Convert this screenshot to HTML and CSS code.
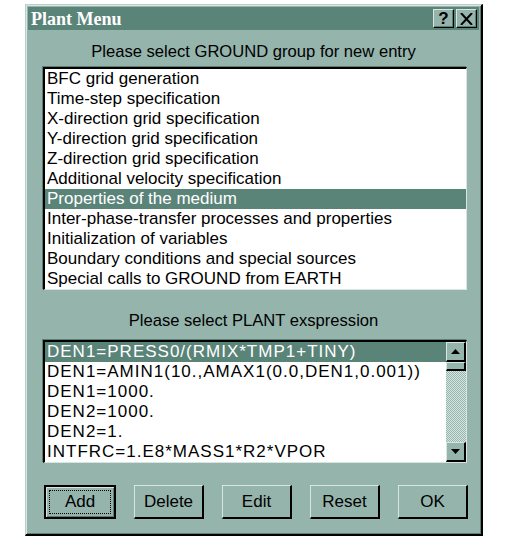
FILE: index.html
```html
<!DOCTYPE html>
<html>
<head>
<meta charset="utf-8">
<link rel="stylesheet" href="styles.css">
</head>
<body>
<div class="window">
  <div class="titlebar">
    <span class="title">Plant Menu</span>
    <div class="tbtns">
      <span class="tbtn">?</span>
      <span class="tbtn x">
        <svg width="13" height="12" viewBox="0 0 13 12"><path d="M1 0 L12 12 M12 0 L1 12" stroke="#000" stroke-width="2" fill="none"/></svg>
      </span>
    </div>
  </div>
  <div class="label first">Please select GROUND group for new entry</div>
  <div class="list">
    <div class="row">BFC grid generation</div>
    <div class="row">Time-step specification</div>
    <div class="row">X-direction grid specification</div>
    <div class="row">Y-direction grid specification</div>
    <div class="row">Z-direction grid specification</div>
    <div class="row">Additional velocity specification</div>
    <div class="row sel">Properties of the medium</div>
    <div class="row">Inter-phase-transfer processes and properties</div>
    <div class="row">Initialization of variables</div>
    <div class="row">Boundary conditions and special sources</div>
    <div class="row">Special calls to GROUND from EARTH</div>
  </div>
  <div class="label second">Please select PLANT exspression</div>
  <div class="list list2">
    <div class="rows">
      <div class="row sel">DEN1=PRESS0/(RMIX*TMP1+TINY)</div>
      <div class="row">DEN1=AMIN1(10.,AMAX1(0.0,DEN1,0.001))</div>
      <div class="row">DEN1=1000.</div>
      <div class="row">DEN2=1000.</div>
      <div class="row">DEN2=1.</div>
      <div class="row">INTFRC=1.E8*MASS1*R2*VPOR</div>
    </div>
    <div class="scrollbar">
      <div class="sbtn"><svg width="9" height="5" viewBox="0 0 9 5"><path d="M4.5 0 L9 5 L0 5 Z" fill="#000"/></svg></div>
      <div class="thumb"></div>
      <div class="track"></div>
      <div class="sbtn"><svg width="9" height="5" viewBox="0 0 9 5"><path d="M0 0 L9 0 L4.5 5 Z" fill="#000"/></svg></div>
    </div>
  </div>
  <div class="buttons">
    <div class="btn default"><span class="focus">Add</span></div>
    <div class="btn">Delete</div>
    <div class="btn">Edit</div>
    <div class="btn">Reset</div>
    <div class="btn">OK</div>
  </div>
</div>
</body>
</html>
```
FILE: styles.css
```css
html, body {
  margin: 0;
  padding: 0;
  background: #ffffff;
}
body {
  font-family: "Liberation Sans", Arial, sans-serif;
}
.window {
  margin: 4px 0 0 25px;
  width: 458px;
  height: 532px;
  box-sizing: border-box;
  background: #95b4ac;
  border-style: solid;
  border-width: 1px 2px 2px 1px;
  border-color: #b9cfc9 #000000 #000000 #b9cfc9;
  box-shadow: inset 1px 1px 0 #d8e6e2, inset -1px -1px 0 #5d7f76;
  padding: 2px 2px 0 2px;
  display: flex;
  flex-direction: column;
}
.titlebar {
  height: 23px;
  background: #5b8479;
  display: flex;
  align-items: center;
  justify-content: space-between;
  padding: 0 2px 0 3px;
}
.title {
  font-family: "Liberation Serif", "Times New Roman", serif;
  font-weight: bold;
  font-size: 18px;
  color: #ffffff;
  line-height: 20px;
}
.tbtns {
  display: flex;
  gap: 2px;
}
.tbtn {
  width: 21px;
  height: 19px;
  box-sizing: border-box;
  background: #95b4ac;
  border-style: solid;
  border-width: 1px;
  border-color: #d8e6e2 #000 #000 #d8e6e2;
  box-shadow: inset -1px -1px 0 #5d7f76;
  display: flex;
  align-items: center;
  justify-content: center;
  font-weight: bold;
  font-size: 17px;
  color: #000;
}
.label {
  text-align: center;
  font-size: 16.6px;
  line-height: 20px;
  color: #000;
}
.label.first {
  padding-top: 12px;
  margin-bottom: 5px;
}
.label.second {
  padding-top: 21px;
  margin-bottom: 9px;
}
.list {
  margin-left: 15px;
  width: 424px;
  box-sizing: border-box;
  background: #ffffff;
  border-style: solid;
  border-width: 2px 1px 1px 2px;
  border-color: #000 #d8e6e2 #d8e6e2 #000;
  box-shadow: -1px -1px 0 #5d7f76;
}
.row {
  height: 20px;
  line-height: 19px;
  font-size: 17px;
  padding-left: 2px;
  color: #000;
  white-space: nowrap;
  overflow: hidden;
}
.row.sel {
  background: #5b8479;
  color: #ffffff;
}
.list2 {
  display: flex;
}
.list2 .row {
  letter-spacing: 1px;
}
.rows {
  flex: 1;
  min-width: 0;
}
.scrollbar {
  width: 20px;
  display: flex;
  flex-direction: column;
}
.sbtn {
  height: 20px;
  box-sizing: border-box;
  background: #95b4ac;
  border-style: solid;
  border-width: 1px 2px 2px 1px;
  border-color: #d8e6e2 #000 #000 #d8e6e2;
  display: flex;
  align-items: center;
  justify-content: center;
}
.thumb {
  height: 9px;
  box-sizing: border-box;
  background: #95b4ac;
  border-style: solid;
  border-width: 1px 2px 2px 1px;
  border-color: #d8e6e2 #000 #000 #d8e6e2;
}
.track {
  flex: 1;
  background-color: #d8e6e2;
  background-image:
    linear-gradient(45deg, #95b4ac 25%, transparent 25%, transparent 75%, #95b4ac 75%),
    linear-gradient(45deg, #95b4ac 25%, transparent 25%, transparent 75%, #95b4ac 75%);
  background-size: 2px 2px;
  background-position: 0 0, 1px 1px;
}
.buttons {
  margin: 22px 0 0 16px;
  width: 424px;
  display: flex;
  justify-content: space-between;
}
.btn {
  width: 70px;
  height: 34px;
  box-sizing: border-box;
  background: #95b4ac;
  border-style: solid;
  border-width: 1px 2px 2px 1px;
  border-color: #d8e6e2 #000 #000 #d8e6e2;
  display: flex;
  align-items: center;
  justify-content: center;
  font-size: 17px;
  color: #000;
}
.btn.default {
  width: 72px;
  border: 2px solid #000;
  box-shadow: inset 1px 1px 0 #d8e6e2, inset -1px -1px 0 #5d7f76;
}
.focus {
  width: 62px;
  height: 24px;
  box-sizing: border-box;
  border: 1px dotted #000;
  display: flex;
  align-items: center;
  justify-content: center;
}
```
